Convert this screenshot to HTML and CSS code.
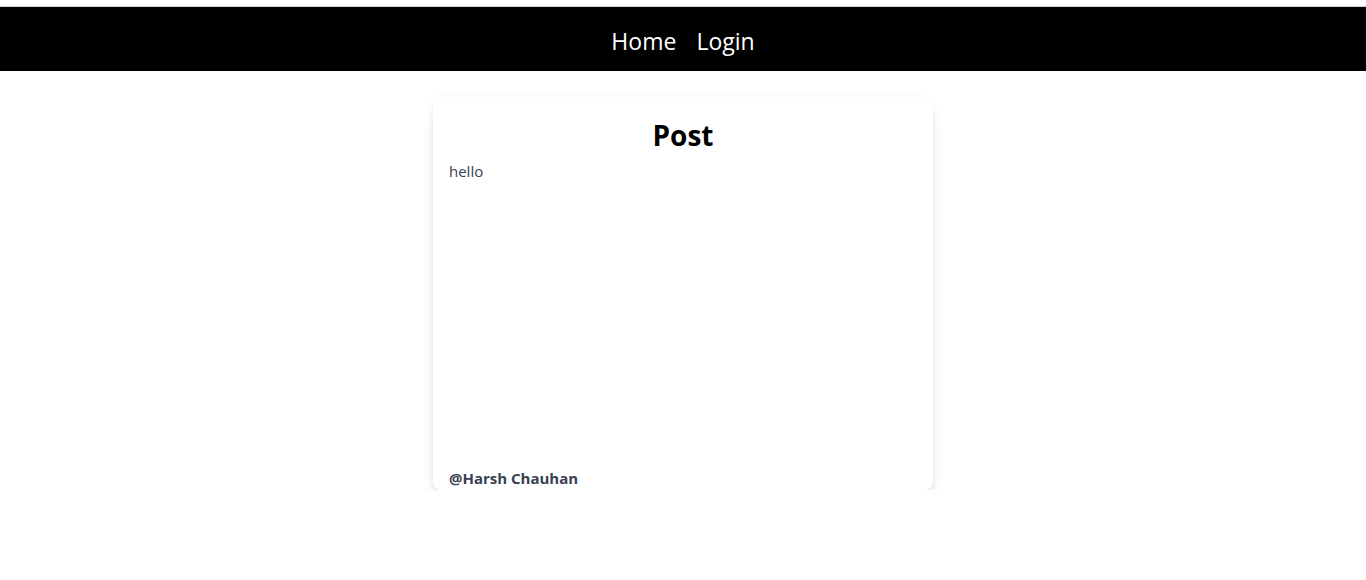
FILE: index.html
```html
<!DOCTYPE html>
<html>
<head>
<meta charset="utf-8">
<link rel="stylesheet" href="styles.css">
</head>
<body>
<header class="topbar">
  <nav class="nav">
    <a class="nav-link" href="#">Home</a>
    <a class="nav-link" href="#">Login</a>
  </nav>
</header>
<main class="main">
  <article class="card">
    <h1 class="card-title">Post</h1>
    <div class="card-body">hello</div>
    <div class="card-author">@Harsh Chauhan</div>
  </article>
</main>
</body>
</html>
```

FILE: styles.css
```css
* { box-sizing: border-box; }
html, body { margin: 0; padding: 0; background: #fff; }
body {
  font-family: "Open Sans", "Noto Sans", "Liberation Sans", sans-serif;
}
.topbar {
  margin-top: 6px;
  border-top: 1px solid #d0d0d0;
  height: 65px;
  background: #000;
  display: flex;
  align-items: center;
  justify-content: center;
  padding-top: 3px;
}
.nav {
  display: flex;
  gap: 20px;
}
.nav-link {
  color: #fff;
  text-decoration: none;
  font-size: 23px;
  line-height: 30px;
}
.main {
  display: flex;
  justify-content: center;
  padding-top: 26px;
}
.card {
  width: 500px;
  height: 393px;
  background: #fff;
  border-radius: 8px;
  box-shadow: 0 10px 15px -3px rgba(0,0,0,0.12), 0 4px 6px -4px rgba(0,0,0,0.12), 0 0 6px rgba(0,0,0,0.04);
  padding: 18px 16px 0;
  display: flex;
  flex-direction: column;
  overflow: hidden;
}
.card-title {
  margin: 0;
  text-align: center;
  font-size: 28px;
  font-weight: 700;
  line-height: 40px;
  color: #000;
}
.card-body {
  margin-top: 5px;
  font-size: 15px;
  line-height: 22px;
  color: #374151;
  flex: 1;
}
.card-author {
  font-size: 15px;
  font-weight: 700;
  line-height: 22px;
  color: #374151;
  margin-bottom: 1px;
}
```
